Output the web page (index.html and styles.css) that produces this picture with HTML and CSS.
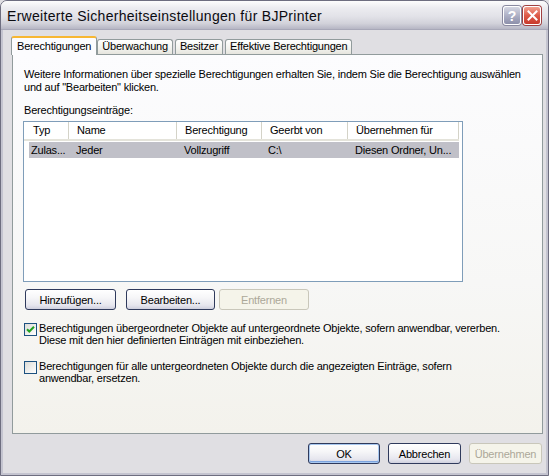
FILE: index.html
```html
<!DOCTYPE html>
<html>
<head>
<meta charset="utf-8">
<link rel="stylesheet" href="styles.css">
</head>
<body>
<div class="window">
  <div class="titlebar">
    <span class="title">Erweiterte Sicherheitseinstellungen für BJPrinter</span>
    <div class="tbtns">
      <span class="tb help">?</span>
      <span class="tb close"><svg width="11" height="11" viewBox="0 0 11 11"><path d="M1.5 1.5 L9.5 9.5 M9.5 1.5 L1.5 9.5" stroke="#fff" stroke-width="2" stroke-linecap="square"/></svg></span>
    </div>
  </div>
  <div class="client">
    <div class="tabs">
      <div class="tab active">Berechtigungen</div>
      <div class="tab">Überwachung</div>
      <div class="tab">Besitzer</div>
      <div class="tab">Effektive Berechtigungen</div>
    </div>
    <div class="panel">
      <p class="info">Weitere Informationen über spezielle Berechtigungen erhalten Sie, indem Sie die Berechtigung auswählen<br>und auf "Bearbeiten" klicken.</p>
      <p class="label">Berechtigungseinträge:</p>
      <div class="listbox">
        <div class="lrow head">
          <div class="c c1">Typ</div>
          <div class="c c2">Name</div>
          <div class="c c3">Berechtigung</div>
          <div class="c c4">Geerbt von</div>
          <div class="c c5">Übernehmen für</div>
        </div>
        <div class="lrow sel">
          <div class="c c1">Zulas...</div>
          <div class="c c2">Jeder</div>
          <div class="c c3">Vollzugriff</div>
          <div class="c c4">C:\</div>
          <div class="c c5">Diesen Ordner, Un...</div>
        </div>
      </div>
      <div class="btnrow">
        <div class="btn w91">Hinzufügen...</div>
        <div class="btn w89">Bearbeiten...</div>
        <div class="btn w90 disabled">Entfernen</div>
      </div>
      <div class="check first">
        <span class="box checked"><svg width="9" height="9" viewBox="0 0 9 9"><path d="M1 4.2 L3.3 6.5 L8 1.8" stroke="#21a121" stroke-width="2" fill="none"/></svg></span>
        <span class="ctext">Berechtigungen übergeordneter Objekte auf untergeordnete Objekte, sofern anwendbar, vererben.<br>Diese mit den hier definierten Einträgen mit einbeziehen.</span>
      </div>
      <div class="check second">
        <span class="box"></span>
        <span class="ctext">Berechtigungen für alle untergeordneten Objekte durch die angezeigten Einträge, sofern<br>anwendbar, ersetzen.</span>
      </div>
    </div>
    <div class="footer">
      <div class="btn def w72">OK</div>
      <div class="btn w73">Abbrechen</div>
      <div class="btn w73 disabled">Übernehmen</div>
    </div>
  </div>
</div>
</body>
</html>
```
FILE: styles.css
```css
html, body {
  margin: 0;
  padding: 0;
  background: #e0dfe3;
}
body {
  width: 549px;
  height: 476px;
  overflow: hidden;
  font-family: "Liberation Sans", Arial, sans-serif;
  font-size: 11px;
  letter-spacing: -0.2px;
  color: #000;
}
.window {
  box-sizing: border-box;
  width: 549px;
  height: 476px;
  border: 1px solid #6e6e80;
  border-radius: 7px 7px 0 0;
  background: #e0dfe3;
  display: flex;
  flex-direction: column;
  overflow: hidden;
}
.titlebar {
  height: 28px;
  flex: none;
  display: flex;
  align-items: center;
  justify-content: space-between;
  padding: 0 7px 0 6px;
  background: linear-gradient(#fdfdfd 0%, #ececf0 25%, #e2e2e8 55%, #d2d2da 80%, #b6b6c4 100%);
  border-bottom: 1px solid #a8a8b8;
}
.title {
  font-size: 14px;
  color: #0b0b10;
  letter-spacing: 0.3px;
  padding-top: 1px;
}
.tbtns {
  display: flex;
  gap: 2px;
  padding-top: 1px;
}
.tb {
  box-sizing: border-box;
  width: 18px;
  height: 19px;
  border: 1px solid #fff;
  border-radius: 3px;
  display: flex;
  align-items: center;
  justify-content: center;
  box-shadow: 0 0 0 1px #8a8aa0;
  letter-spacing: 0;
}
.help {
  background: linear-gradient(#d4d6e2, #a6a9c0 60%, #8d90aa);
  color: #fff;
  font-weight: bold;
  font-size: 14px;
}
.close {
  background: linear-gradient(#f2a08e, #dd5a48 50%, #c83a2c);
  box-shadow: 0 0 0 1px #a04040;
}
.client {
  flex: 1;
  display: flex;
  flex-direction: column;
  padding: 6px 4px 0 9px;
  border-left: 2px solid #c4c4d0;
  border-right: 2px solid #c4c4d0;
  border-bottom: 2px solid #c4c4d0;
}
.tabs {
  display: flex;
  align-items: flex-end;
  height: 18px;
  padding-left: 1px;
  position: relative;
  z-index: 1;
}
.tab {
  box-sizing: border-box;
  height: 15px;
  padding: 0 4px;
  margin-right: 2px;
  border: 1px solid #919b9c;
  border-bottom: none;
  border-radius: 3px 3px 0 0;
  background: linear-gradient(#ffffff, #f2f2ee 60%, #e6e5de);
  line-height: 13px;
  font-size: 11px;
  margin-bottom: 0;
}
.tab.active {
  height: 19px;
  padding: 0 5px;
  margin-left: -2px;
  margin-right: 0;
  margin-bottom: -1px;
  background: #fcfcfe;
  border-top: 2px solid #f7b733;
  line-height: 16px;
}
.panel {
  box-sizing: border-box;
  width: 531px;
  height: 380px;
  border: 1px solid #919b9c;
  background: linear-gradient(#fcfcfe 0%, #f7f7f6 60%, #f3f2ec 100%);
  padding: 12px 12px 0 11px;
}
.panel p {
  margin: 0;
  line-height: 13px;
}
.info {
  margin-top: 1px !important;
}
.label {
  margin-top: 10px !important;
}
.listbox {
  box-sizing: border-box;
  width: 440px;
  height: 161px;
  margin-top: 4px;
  margin-left: -1px;
  border: 1px solid #7f9db9;
  background: #fff;
  padding-right: 3px;
}
.lrow {
  display: flex;
  height: 17px;
  align-items: center;
}
.lrow.head {
  height: 17px;
  border-bottom: 2px solid #e4e3da;
}
.c {
  box-sizing: border-box;
  white-space: nowrap;
  overflow: hidden;
}
.head .c {
  height: 17px;
  line-height: 17px;
  padding-left: 8px;
  border-right: 1px solid #d4d3c8;
}
.head .c1 { padding-left: 9px; }
.c1 { width: 45px; }
.c2 { width: 108px; }
.c3 { width: 85px; }
.c4 { width: 86px; }
.c5 { width: 111px; }
.lrow.sel {
  margin-left: 5px;
  background: #c0c0c8;
  height: 16px;
  margin-top: 1px;
}
.sel .c { padding-left: 2px; }
.sel .c1 { width: 40px; }
.sel .c2 { padding-left: 7px; }
.sel .c3 { padding-left: 7px; }
.sel .c4 { padding-left: 6px; }
.sel .c5 { padding-left: 7px; }
.btnrow {
  display: flex;
  gap: 10px;
  margin-top: 7px;
  padding-left: 1px;
}
.btnrow .btn.disabled { margin-left: -6px; }
.btn {
  box-sizing: border-box;
  height: 21px;
  border: 1px solid #2f3a5c;
  border-radius: 3px;
  background: linear-gradient(#ffffff 0%, #f6f6f8 40%, #e6e6ee 80%, #cfd0de 100%);
  display: flex;
  align-items: center;
  justify-content: center;
  font-size: 11px;
}
.btn.def {
  box-shadow: inset 0 0 0 1px #a8c8f0, inset 0 -1px 0 1px #7ca4e0;
}
.btn.disabled {
  border-color: #c9c7ba;
  background: #f5f4ea;
  color: #aca899;
}
.w91 { width: 91px; }
.w89 { width: 89px; }
.w90 { width: 90px; }
.w72 { width: 72px; }
.w73 { width: 73px; }
.check {
  display: flex;
  align-items: flex-start;
  gap: 2px;
}
.check.first { margin-top: 12px; }
.check.second { margin-top: 14px; }
.box {
  box-sizing: border-box;
  width: 13px;
  height: 13px;
  flex: none;
  margin-top: 1px;
  border: 1px solid #1c5180;
  background: linear-gradient(135deg, #dcdcd7, #ffffff);
  display: flex;
  align-items: center;
  justify-content: center;
}
.ctext {
  line-height: 12px;
}
.footer {
  display: flex;
  justify-content: flex-end;
  gap: 8px;
  margin-top: 9px;
  padding-right: 0;
}
```
